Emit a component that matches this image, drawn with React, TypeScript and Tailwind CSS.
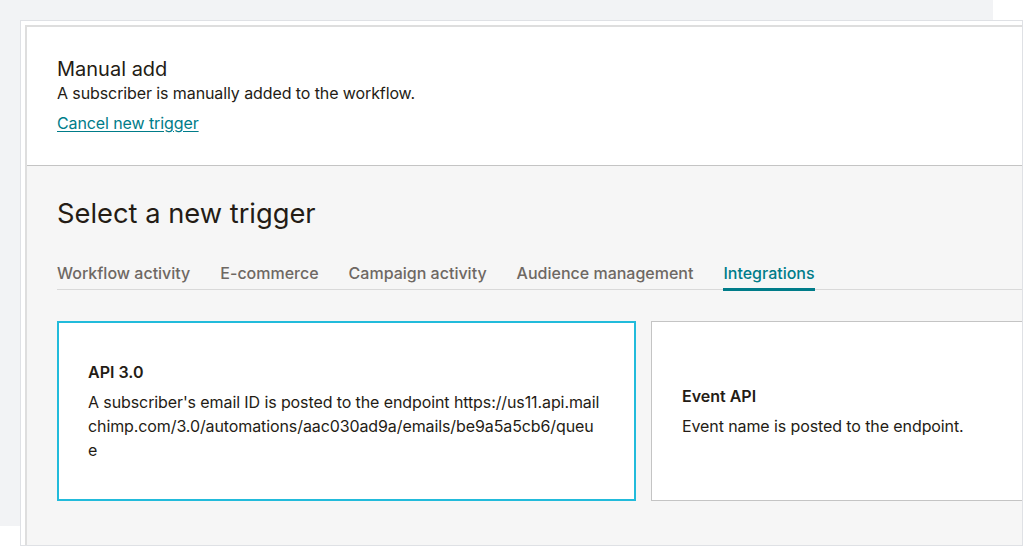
import React from "react";

const tabs = [
  "Workflow activity",
  "E-commerce",
  "Campaign activity",
  "Audience management",
  "Integrations",
];

export default function App() {
  return (
    <div
      className="w-[1023px] h-[546px] bg-white overflow-hidden text-[#241c15]"
      style={{ fontFamily: 'Inter, "Liberation Sans", Arial, sans-serif' }}
    >
      <div className="w-[993px] h-[526px] bg-[#f2f3f5] pt-[20px] pl-[20px]">
        <div className="w-[1003px] h-[526px] border border-[#dfe1e5] bg-white pl-[4px] pt-[4px] flex">
          <div className="flex-1 min-w-0 border-l-2 border-t-2 border-[#dedede] flex flex-col overflow-hidden">
            <div className="h-[139px] shrink-0 bg-white border-b border-[#c4c4c4] pl-[30px] pt-[30px]">
              <div className="text-[20px] leading-[24px]">Manual add</div>
              <div className="text-[16px] leading-[24px] tracking-[-0.1px]">
                A subscriber is manually added to the workflow.
              </div>
              <a
                href="#"
                className="inline-block mt-[6px] text-[16px] leading-[24px] tracking-[-0.1px] text-[#007c89] underline underline-offset-2"
              >
                Cancel new trigger
              </a>
            </div>
            <div className="flex-1 bg-[#f6f6f6] pl-[30px] pt-[30px]">
              <h1 className="text-[27.3px] leading-[36px]">Select a new trigger</h1>
              <div className="mt-[29px] flex gap-[30px] border-b border-[#d9d9d9]">
                {tabs.map((t) => (
                  <div
                    key={t}
                    className={
                      "text-[16px] leading-[24px] font-medium pb-[3px] -mb-[2px] border-b-[3px] whitespace-nowrap " +
                      (t === "Integrations"
                        ? "border-[#007c89] text-[#007c89]"
                        : "border-transparent text-[#6e6863]")
                    }
                  >
                    {t}
                  </div>
                ))}
              </div>
              <div className="mt-[31px] flex gap-[15px]">
                <div className="w-[579px] h-[180px] shrink-0 bg-white border-2 border-[#22bbdb] pl-[29px] pr-[33px] flex flex-col justify-center">
                  <div className="text-[16px] leading-[24px] font-semibold mb-[6px]">API 3.0</div>
                  <div className="text-[16px] leading-[24px] tracking-[-0.1px] break-all">
                    A subscriber's email ID is posted to the endpoint https://us11.api.mailchimp.com/3.0/automations/aac030ad9a/emails/be9a5a5cb6/queue
                  </div>
                </div>
                <div className="w-[579px] h-[180px] shrink-0 bg-white border border-[#c4c4c4] px-[30px] flex flex-col justify-center">
                  <div className="text-[16px] leading-[24px] font-semibold mb-[6px]">Event API</div>
                  <div className="text-[16px] leading-[24px] tracking-[-0.1px]">
                    Event name is posted to the endpoint.
                  </div>
                </div>
              </div>
            </div>
          </div>
        </div>
      </div>
    </div>
  );
}
